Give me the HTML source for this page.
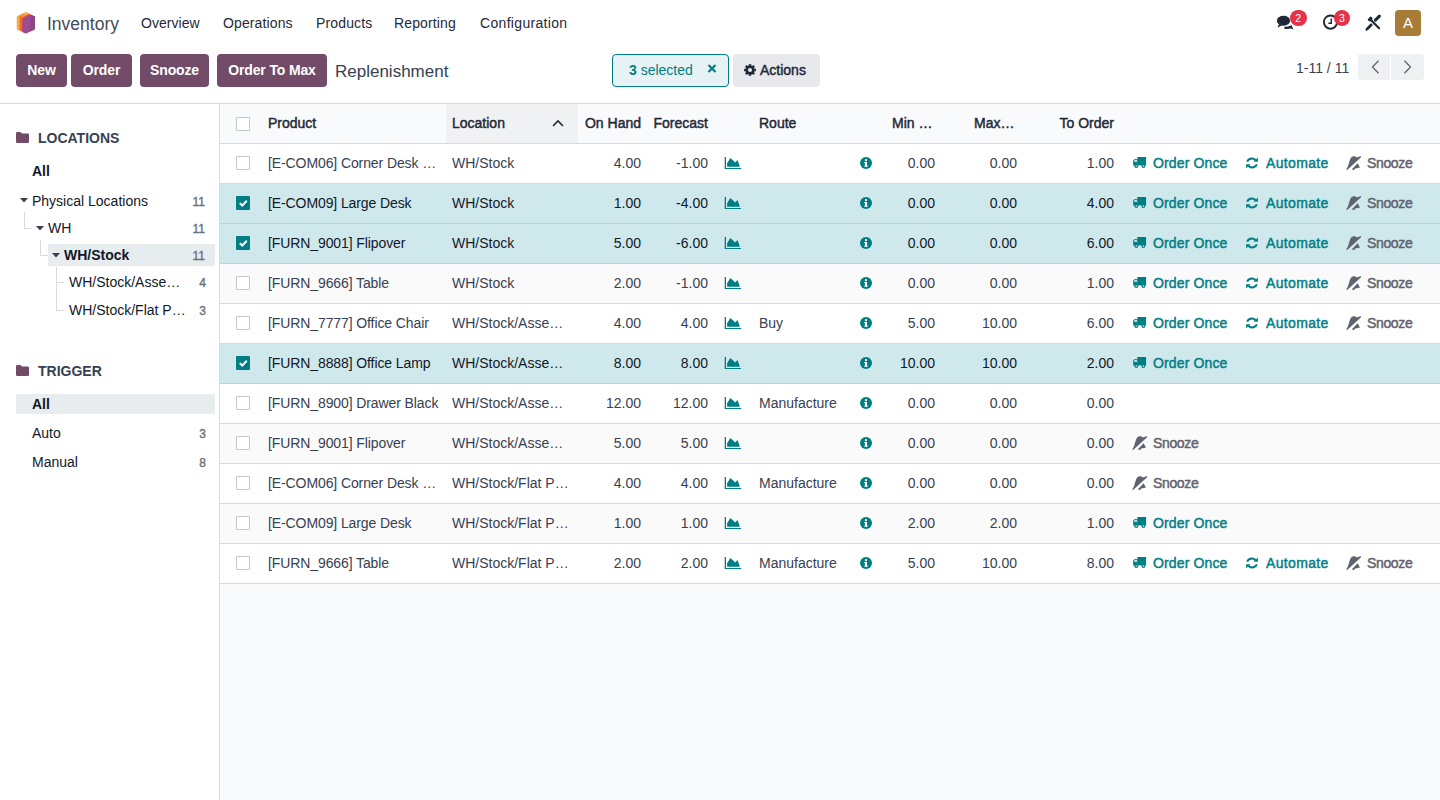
<!DOCTYPE html>
<html><head><meta charset="utf-8"><title>Replenishment</title>
<style>
*{box-sizing:border-box;margin:0;padding:0}
html,body{width:1440px;height:800px;overflow:hidden;background:#fff}
body{font-family:"Liberation Sans",sans-serif;font-size:14px;color:#374151;position:relative}
.a{position:absolute;white-space:nowrap;line-height:20px}
.b{font-weight:bold}
#nav{position:absolute;left:0;top:0;width:1440px;height:46px;background:#fff}
.nv{color:#1f2937}
#cp{position:absolute;left:0;top:46px;width:1440px;height:58px;background:#fff;border-bottom:1px solid #d8dadd}
.btnp{position:absolute;top:8px;height:33px;background:#714b67;color:#fff;font-weight:bold;letter-spacing:-0.15px;border-radius:4px;text-align:center;line-height:32px}
#side{position:absolute;left:0;top:104px;width:220px;height:696px;background:#fff;border-right:1px solid #d8dadd}
.cnt{color:#6b6f7a;font-size:12px;-webkit-text-stroke:0.35px #6b6f7a;text-align:right;width:40px}
#main{position:absolute;left:220px;top:104px;width:1220px;height:696px;background:#f9fafb}
#thead{position:absolute;left:0;top:0;width:1220px;height:40px;background:#f9fafb;border-bottom:1px solid #d8dadd;color:#1f2937}
#thead .a{-webkit-text-stroke:0.45px #1f2937}
.row{position:absolute;left:0;width:1220px;height:40px;background:#fff;border-bottom:1px solid #d8dadd;color:#374151}
.row.even{background:#fafafb}
.row.sel{background:#cfe8ec;color:#111827;border-bottom-color:#b9d5da}
.row .a,#thead .a{top:9px}
.r{text-align:right}
.chk{position:absolute;left:16px;top:12px;width:14px;height:14px;border:1px solid #c5c8ce;background:#fff;border-radius:1px}
.chk.on{background:#017e84;border-color:#017e84}
.teal{color:#017e84}
.act{color:#017e84;-webkit-text-stroke:0.45px #017e84}
.sn{color:#5f636f;-webkit-text-stroke:0.45px #5f636f}
svg{position:absolute;overflow:visible}
</style></head>
<body>
<div id="nav">
<svg style="left:0;top:0" width="40" height="40" viewBox="0 0 40 40"><polygon points="25.8,12.3 34.9,16.5 34.9,29.3 25.8,33.5 16.9,29.3 16.9,16.5" fill="#f26b21"/><polygon points="16.9,16.5 19.6,15.2 19.6,30.6 16.9,29.3" fill="#fbab48"/><polygon points="19.6,15.2 25.8,12.3 29,13.8 22.3,17.6" fill="#f7943a"/><polygon points="23.5,13.4 25.8,12.3 28,13.3 25.5,14.5" fill="#fcc24a"/><path d="M22.3,19.6 Q22.6,17.8 24.5,17 L30.2,14.4 L34.9,16.5 L34.9,29.3 L25.8,33.5 L22.3,31.9z" fill="#9d4c92"/><polygon points="30.4,14.6 34.9,16.5 34.9,29.3 30.4,31.4" fill="#8a4787"/></svg>
<div class="a" style="left:47px;top:13px;font-size:17.5px;line-height:22px;color:#454b57">Inventory</div>
<div class="a nv" style="left:141px;top:13px;letter-spacing:0.05px">Overview</div>
<div class="a nv" style="left:223px;top:13px;letter-spacing:0.12px">Operations</div>
<div class="a nv" style="left:316px;top:13px;letter-spacing:0.15px">Products</div>
<div class="a nv" style="left:394px;top:13px;letter-spacing:0.12px">Reporting</div>
<div class="a nv" style="left:480px;top:13px;letter-spacing:0.32px">Configuration</div>
<svg style="left:1270px;top:8px" width="40" height="26" viewBox="0 0 40 26"><ellipse cx="13.5" cy="12.8" rx="6.6" ry="5" fill="#1f2937"/><path d="M9 16L7.5 19.8L12.5 17z" fill="#1f2937"/><path d="M16 19.5Q19.5 19.6 21.5 17L23.5 21.6L19.5 20z" fill="#1f2937"/><path d="M14.5 19.8Q18.5 20.3 21.5 18.6" stroke="#1f2937" stroke-width="2.4" fill="none"/></svg>
<div style="position:absolute;left:1290px;top:9.7px;width:16.5px;height:16px;border-radius:8px;background:#e3324a;color:#fff;font-size:10.5px;line-height:16px;text-align:center">2</div>
<svg style="left:1318px;top:8px" width="26" height="26" viewBox="0 0 26 26"><circle cx="12.5" cy="14.1" r="6.6" stroke="#1f2937" stroke-width="1.9" fill="none"/><path d="M13.3 10.6V15.2H10.4" stroke="#1f2937" stroke-width="1.4" fill="none"/></svg>
<div style="position:absolute;left:1333.8px;top:9.7px;width:16.2px;height:16px;border-radius:8px;background:#e3324a;color:#fff;font-size:10.5px;line-height:16px;text-align:center">3</div>
<svg style="left:1360px;top:8px" width="26" height="26" viewBox="0 0 26 26"><path d="M11.4 12.4L19.1 20.2" stroke="#1f2937" stroke-width="2.2" stroke-linecap="round"/><circle cx="10.1" cy="11" r="2.4" fill="#1f2937"/><path d="M6.2 9.6L8.6 7.2L10.2 8.8L8 11z" fill="#fff"/><path d="M15.4 12.1L19.4 8.1" stroke="#1f2937" stroke-width="3" stroke-linecap="round"/><path d="M11.1 16.6L7.2 20.5L6.5 21.6L7.6 20.9L11.5 17z" stroke="#1f2937" stroke-width="2.2" stroke-linejoin="round" fill="#1f2937"/></svg>
<div style="position:absolute;left:1395px;top:10px;width:26px;height:26px;background:#a67c36;border-radius:4px;color:#fff;text-align:center;line-height:26px;font-size:15px">A</div>
</div>
<div id="cp">
<div class="btnp" style="left:16px;width:51px">New</div>
<div class="btnp" style="left:71px;width:61px">Order</div>
<div class="btnp" style="left:140px;width:69px">Snooze</div>
<div class="btnp" style="left:217px;width:110px">Order To Max</div>
<div class="a" style="left:335px;top:14.5px;font-size:17px;line-height:22px;color:#374151">Replenishment</div>
<div style="position:absolute;left:612px;top:8px;width:117px;height:33px;border:1px solid #017e84;background:#e6f2f3;border-radius:4px"></div>
<div class="a teal" style="left:629px;top:14px"><b>3</b> selected</div>
<svg style="left:707px;top:18px" width="10" height="9" viewBox="0 0 10 9"><path d="M1.5 1L8.5 8M8.5 1L1.5 8" stroke="#017e84" stroke-width="2.2"/></svg>
<div style="position:absolute;left:733px;top:8px;width:87px;height:33px;background:#e7e9ed;border-radius:4px"></div>
<svg style="left:744px;top:18px" width="12" height="12" viewBox="0 0 12 12"><polygon points="11.86,4.71 11.86,7.29 10.43,7.24 10.01,8.25 11.05,9.23 9.23,11.05 8.25,10.01 7.24,10.43 7.29,11.86 4.71,11.86 4.76,10.43 3.75,10.01 2.77,11.05 0.95,9.23 1.99,8.25 1.57,7.24 0.14,7.29 0.14,4.71 1.57,4.76 1.99,3.75 0.95,2.77 2.77,0.95 3.75,1.99 4.76,1.57 4.71,0.14 7.29,0.14 7.24,1.57 8.25,1.99 9.23,0.95 11.05,2.77 10.01,3.75 10.43,4.76" fill="#1f2937"/><circle cx="6" cy="6" r="2" fill="#e7e9ed"/></svg>
<div class="a" style="left:760px;top:14px;color:#1f2937;-webkit-text-stroke:0.45px #1f2937">Actions</div>
<div class="a" style="left:1296px;top:12px;color:#374151">1-11 / 11</div>
<div style="position:absolute;left:1358px;top:8px;width:32px;height:26px;background:#eff0f2;border-radius:3px 0 0 3px"></div>
<div style="position:absolute;left:1391px;top:8px;width:33px;height:26px;background:#eff0f2;border-radius:0 3px 3px 0"></div>
<svg style="left:1371px;top:14px" width="9" height="14" viewBox="0 0 9 14"><path d="M7.5 0.8L1.5 7L7.5 13.2" stroke="#5f636f" stroke-width="1.3" fill="none"/></svg>
<svg style="left:1403px;top:14px" width="9" height="14" viewBox="0 0 9 14"><path d="M1.5 0.8L7.5 7L1.5 13.2" stroke="#5f636f" stroke-width="1.3" fill="none"/></svg>
</div>
<div id="side">
<svg style="left:16px;top:28px" width="13" height="11" viewBox="0 0 13 11"><path d="M0 1.2Q0 0 1.2 0H4.5L6 1.6H11.8Q13 1.6 13 2.8V9.8Q13 11 11.8 11H1.2Q0 11 0 9.8z" fill="#714b67"/></svg>
<div class="a b" style="left:38px;top:24px;color:#374151">LOCATIONS</div>
<div class="a b" style="left:32px;top:57px;color:#111827">All</div>
<svg style="left:20px;top:94px" width="8" height="5" viewBox="0 0 8 5"><path d="M0 0H8L4 4.5z" fill="#374151"/></svg>
<div class="a " style="left:32px;top:87px;color:#111827">Physical Locations</div>
<div class="a cnt" style="left:165px;top:88px;">11</div>
<div style="position:absolute;left:24px;top:108px;width:8px;height:17px;border-left:1px solid #d8dadd;border-bottom:1px solid #d8dadd"></div>
<svg style="left:36px;top:122px" width="8" height="5" viewBox="0 0 8 5"><path d="M0 0H8L4 4.5z" fill="#374151"/></svg>
<div class="a " style="left:48px;top:114px;color:#111827">WH</div>
<div class="a cnt" style="left:165px;top:115px;">11</div>
<div style="position:absolute;left:40px;top:136px;width:8px;height:16px;border-left:1px solid #d8dadd;border-bottom:1px solid #d8dadd"></div>
<div style="position:absolute;left:48px;top:140px;width:167px;height:22px;background:#e7ecef"></div>
<svg style="left:52px;top:149px" width="8" height="5" viewBox="0 0 8 5"><path d="M0 0H8L4 4.5z" fill="#374151"/></svg>
<div class="a b" style="left:64px;top:141px;color:#111827">WH/Stock</div>
<div class="a cnt" style="left:165px;top:142px;">11</div>
<div style="position:absolute;left:56px;top:163px;width:8px;height:16px;border-left:1px solid #d8dadd;border-bottom:1px solid #d8dadd"></div>
<div style="position:absolute;left:56px;top:179px;width:8px;height:28px;border-left:1px solid #d8dadd;border-bottom:1px solid #d8dadd"></div>
<div class="a " style="left:69px;top:168px;color:#111827">WH/Stock/Asse…</div>
<div class="a cnt" style="left:166px;top:169px;">4</div>
<div class="a " style="left:69px;top:196px;color:#111827">WH/Stock/Flat P…</div>
<div class="a cnt" style="left:166px;top:197px;">3</div>
<svg style="left:16px;top:261px" width="13" height="11" viewBox="0 0 13 11"><path d="M0 1.2Q0 0 1.2 0H4.5L6 1.6H11.8Q13 1.6 13 2.8V9.8Q13 11 11.8 11H1.2Q0 11 0 9.8z" fill="#714b67"/></svg>
<div class="a b" style="left:38px;top:257px;color:#374151">TRIGGER</div>
<div style="position:absolute;left:16px;top:290px;width:199px;height:20px;background:#e7ecef"></div>
<div class="a b" style="left:32px;top:290px;color:#111827">All</div>
<div class="a " style="left:32px;top:319px;color:#111827">Auto</div>
<div class="a cnt" style="left:166px;top:320px;">3</div>
<div class="a " style="left:32px;top:348px;color:#111827">Manual</div>
<div class="a cnt" style="left:166px;top:349px;">8</div>
</div>
<div id="main">
<div id="thead">
<div style="position:absolute;left:226px;top:0;width:132px;height:39px;background:#eff1f3"></div>
<div class="chk" style="top:13px"></div>
<div class="a " style="left:48px;top:9px;">Product</div>
<div class="a " style="left:232px;top:9px;">Location</div>
<svg style="left:332px;top:15px" width="12" height="8" viewBox="0 0 12 8"><path d="M1 7L6 2L11 7" stroke="#1f2937" stroke-width="1.6" fill="none"/></svg>
<div class="a r " style="right:799px;top:9px;">On Hand</div>
<div class="a r " style="right:732px;top:9px;">Forecast</div>
<div class="a " style="left:539px;top:9px;">Route</div>
<div class="a " style="left:672px;top:9px;">Min …</div>
<div class="a " style="left:754px;top:9px;">Max…</div>
<div class="a r " style="right:326px;top:9px;">To Order</div>
</div>
<div class="row" style="top:40px">
<div class="chk"></div>
<div class="a " style="left:48px;top:9px;letter-spacing:-0.1px">[E-COM06] Corner Desk …</div>
<div class="a " style="left:232px;top:9px;">WH/Stock</div>
<div class="a r " style="right:799px;top:9px;">4.00</div>
<div class="a r " style="right:732px;top:9px;">-1.00</div>
<svg style="left:504px;top:12px" width="17" height="14" viewBox="0 0 17 14"><path d="M0.7 1H2V12H17V13.1H0.7z" fill="#017e84"/><path d="M3.1 10.7V7.2L6.4 2L11.2 6.6L13.5 3.9L15.9 10.7z" fill="#017e84"/></svg>
<svg style="left:640px;top:13px" width="12" height="12" viewBox="0 0 12 12"><circle cx="6" cy="6" r="6" fill="#017e84"/><rect x="5" y="5" width="2" height="4.5" fill="#fff"/><rect x="4.2" y="8.6" width="3.6" height="1" fill="#fff"/><rect x="4.2" y="5" width="2.8" height="1" fill="#fff"/><circle cx="6" cy="3.2" r="1.1" fill="#fff"/></svg>
<div class="a r " style="right:505px;top:9px;">0.00</div>
<div class="a r " style="right:423px;top:9px;">0.00</div>
<div class="a r " style="right:326px;top:9px;">1.00</div>
<svg style="left:913px;top:13px" width="14" height="12" viewBox="0 0 14 12"><rect x="4.3" y="0" width="8.8" height="8.4" fill="#017e84"/><path d="M0.2 8.4V3.6L1.6 2H4.6V8.4z" fill="#017e84"/><path d="M1.3 3.4L2 2.8H4V5.1H1.3z" fill="#fff" opacity="0.75"/><circle cx="3.3" cy="9.1" r="2" fill="#017e84"/><circle cx="10.4" cy="9.1" r="2" fill="#017e84"/><circle cx="3.3" cy="9.1" r="0.8" fill="#fff" opacity="0.8"/><circle cx="10.4" cy="9.1" r="0.8" fill="#fff" opacity="0.8"/></svg>
<div class="a act" style="left:933px;top:9px;letter-spacing:0.14px">Order Once</div>
<svg style="left:1026px;top:13px" width="12" height="12" viewBox="0 0 12 12"><path d="M1.1 4.6A5 4.6 0 0 1 9.6 3.2" stroke="#017e84" stroke-width="2.1" fill="none"/><path d="M11.9 0.4V4.7H7.6z" fill="#017e84"/><path d="M10.9 7.4A5 4.6 0 0 1 2.4 8.8" stroke="#017e84" stroke-width="2.1" fill="none"/><path d="M0.1 11.6V7.3H4.4z" fill="#017e84"/></svg>
<div class="a act" style="left:1046px;top:9px;letter-spacing:0.35px">Automate</div>
<svg style="left:1126px;top:12px" width="16" height="15" viewBox="0 0 16 15"><path d="M0.2 13.6C1.8 11.5 2.6 8.5 3.4 5.5C4.2 2.4 5.5 0.4 7.3 0.2C8.8 0.1 10 0.6 11 1.6L14.2 0.3C14.8 0.1 15.4 0.7 15.1 1.3L1.1 14.1Z" fill="#5f636f"/><path d="M6 13.2L11.6 7.3L14 11.6Z" fill="#5f636f"/><path d="M6.2 12.6L9.3 12.3L8.6 13.8L6.8 14Z" fill="#5f636f"/></svg>
<div class="a sn" style="left:1147px;top:9px;letter-spacing:-0.35px">Snooze</div>
</div>
<div class="row sel" style="top:80px">
<svg style="left:16px;top:12px" width="14" height="14" viewBox="0 0 14 14"><rect x="0" y="0" width="14" height="14" rx="1" fill="#017e84"/><path d="M3.8 7.1L6.3 9.5L10.8 4.8" stroke="#fff" stroke-width="2" fill="none"/></svg>
<div class="a " style="left:48px;top:9px;letter-spacing:-0.1px">[E-COM09] Large Desk</div>
<div class="a " style="left:232px;top:9px;">WH/Stock</div>
<div class="a r " style="right:799px;top:9px;">1.00</div>
<div class="a r " style="right:732px;top:9px;">-4.00</div>
<svg style="left:504px;top:12px" width="17" height="14" viewBox="0 0 17 14"><path d="M0.7 1H2V12H17V13.1H0.7z" fill="#017e84"/><path d="M3.1 10.7V7.2L6.4 2L11.2 6.6L13.5 3.9L15.9 10.7z" fill="#017e84"/></svg>
<svg style="left:640px;top:13px" width="12" height="12" viewBox="0 0 12 12"><circle cx="6" cy="6" r="6" fill="#017e84"/><rect x="5" y="5" width="2" height="4.5" fill="#fff"/><rect x="4.2" y="8.6" width="3.6" height="1" fill="#fff"/><rect x="4.2" y="5" width="2.8" height="1" fill="#fff"/><circle cx="6" cy="3.2" r="1.1" fill="#fff"/></svg>
<div class="a r " style="right:505px;top:9px;">0.00</div>
<div class="a r " style="right:423px;top:9px;">0.00</div>
<div class="a r " style="right:326px;top:9px;">4.00</div>
<svg style="left:913px;top:13px" width="14" height="12" viewBox="0 0 14 12"><rect x="4.3" y="0" width="8.8" height="8.4" fill="#017e84"/><path d="M0.2 8.4V3.6L1.6 2H4.6V8.4z" fill="#017e84"/><path d="M1.3 3.4L2 2.8H4V5.1H1.3z" fill="#fff" opacity="0.75"/><circle cx="3.3" cy="9.1" r="2" fill="#017e84"/><circle cx="10.4" cy="9.1" r="2" fill="#017e84"/><circle cx="3.3" cy="9.1" r="0.8" fill="#fff" opacity="0.8"/><circle cx="10.4" cy="9.1" r="0.8" fill="#fff" opacity="0.8"/></svg>
<div class="a act" style="left:933px;top:9px;letter-spacing:0.14px">Order Once</div>
<svg style="left:1026px;top:13px" width="12" height="12" viewBox="0 0 12 12"><path d="M1.1 4.6A5 4.6 0 0 1 9.6 3.2" stroke="#017e84" stroke-width="2.1" fill="none"/><path d="M11.9 0.4V4.7H7.6z" fill="#017e84"/><path d="M10.9 7.4A5 4.6 0 0 1 2.4 8.8" stroke="#017e84" stroke-width="2.1" fill="none"/><path d="M0.1 11.6V7.3H4.4z" fill="#017e84"/></svg>
<div class="a act" style="left:1046px;top:9px;letter-spacing:0.35px">Automate</div>
<svg style="left:1126px;top:12px" width="16" height="15" viewBox="0 0 16 15"><path d="M0.2 13.6C1.8 11.5 2.6 8.5 3.4 5.5C4.2 2.4 5.5 0.4 7.3 0.2C8.8 0.1 10 0.6 11 1.6L14.2 0.3C14.8 0.1 15.4 0.7 15.1 1.3L1.1 14.1Z" fill="#5f636f"/><path d="M6 13.2L11.6 7.3L14 11.6Z" fill="#5f636f"/><path d="M6.2 12.6L9.3 12.3L8.6 13.8L6.8 14Z" fill="#5f636f"/></svg>
<div class="a sn" style="left:1147px;top:9px;letter-spacing:-0.35px">Snooze</div>
</div>
<div class="row sel" style="top:120px">
<svg style="left:16px;top:12px" width="14" height="14" viewBox="0 0 14 14"><rect x="0" y="0" width="14" height="14" rx="1" fill="#017e84"/><path d="M3.8 7.1L6.3 9.5L10.8 4.8" stroke="#fff" stroke-width="2" fill="none"/></svg>
<div class="a " style="left:48px;top:9px;letter-spacing:-0.1px">[FURN_9001] Flipover</div>
<div class="a " style="left:232px;top:9px;">WH/Stock</div>
<div class="a r " style="right:799px;top:9px;">5.00</div>
<div class="a r " style="right:732px;top:9px;">-6.00</div>
<svg style="left:504px;top:12px" width="17" height="14" viewBox="0 0 17 14"><path d="M0.7 1H2V12H17V13.1H0.7z" fill="#017e84"/><path d="M3.1 10.7V7.2L6.4 2L11.2 6.6L13.5 3.9L15.9 10.7z" fill="#017e84"/></svg>
<svg style="left:640px;top:13px" width="12" height="12" viewBox="0 0 12 12"><circle cx="6" cy="6" r="6" fill="#017e84"/><rect x="5" y="5" width="2" height="4.5" fill="#fff"/><rect x="4.2" y="8.6" width="3.6" height="1" fill="#fff"/><rect x="4.2" y="5" width="2.8" height="1" fill="#fff"/><circle cx="6" cy="3.2" r="1.1" fill="#fff"/></svg>
<div class="a r " style="right:505px;top:9px;">0.00</div>
<div class="a r " style="right:423px;top:9px;">0.00</div>
<div class="a r " style="right:326px;top:9px;">6.00</div>
<svg style="left:913px;top:13px" width="14" height="12" viewBox="0 0 14 12"><rect x="4.3" y="0" width="8.8" height="8.4" fill="#017e84"/><path d="M0.2 8.4V3.6L1.6 2H4.6V8.4z" fill="#017e84"/><path d="M1.3 3.4L2 2.8H4V5.1H1.3z" fill="#fff" opacity="0.75"/><circle cx="3.3" cy="9.1" r="2" fill="#017e84"/><circle cx="10.4" cy="9.1" r="2" fill="#017e84"/><circle cx="3.3" cy="9.1" r="0.8" fill="#fff" opacity="0.8"/><circle cx="10.4" cy="9.1" r="0.8" fill="#fff" opacity="0.8"/></svg>
<div class="a act" style="left:933px;top:9px;letter-spacing:0.14px">Order Once</div>
<svg style="left:1026px;top:13px" width="12" height="12" viewBox="0 0 12 12"><path d="M1.1 4.6A5 4.6 0 0 1 9.6 3.2" stroke="#017e84" stroke-width="2.1" fill="none"/><path d="M11.9 0.4V4.7H7.6z" fill="#017e84"/><path d="M10.9 7.4A5 4.6 0 0 1 2.4 8.8" stroke="#017e84" stroke-width="2.1" fill="none"/><path d="M0.1 11.6V7.3H4.4z" fill="#017e84"/></svg>
<div class="a act" style="left:1046px;top:9px;letter-spacing:0.35px">Automate</div>
<svg style="left:1126px;top:12px" width="16" height="15" viewBox="0 0 16 15"><path d="M0.2 13.6C1.8 11.5 2.6 8.5 3.4 5.5C4.2 2.4 5.5 0.4 7.3 0.2C8.8 0.1 10 0.6 11 1.6L14.2 0.3C14.8 0.1 15.4 0.7 15.1 1.3L1.1 14.1Z" fill="#5f636f"/><path d="M6 13.2L11.6 7.3L14 11.6Z" fill="#5f636f"/><path d="M6.2 12.6L9.3 12.3L8.6 13.8L6.8 14Z" fill="#5f636f"/></svg>
<div class="a sn" style="left:1147px;top:9px;letter-spacing:-0.35px">Snooze</div>
</div>
<div class="row even" style="top:160px">
<div class="chk"></div>
<div class="a " style="left:48px;top:9px;letter-spacing:-0.1px">[FURN_9666] Table</div>
<div class="a " style="left:232px;top:9px;">WH/Stock</div>
<div class="a r " style="right:799px;top:9px;">2.00</div>
<div class="a r " style="right:732px;top:9px;">-1.00</div>
<svg style="left:504px;top:12px" width="17" height="14" viewBox="0 0 17 14"><path d="M0.7 1H2V12H17V13.1H0.7z" fill="#017e84"/><path d="M3.1 10.7V7.2L6.4 2L11.2 6.6L13.5 3.9L15.9 10.7z" fill="#017e84"/></svg>
<svg style="left:640px;top:13px" width="12" height="12" viewBox="0 0 12 12"><circle cx="6" cy="6" r="6" fill="#017e84"/><rect x="5" y="5" width="2" height="4.5" fill="#fff"/><rect x="4.2" y="8.6" width="3.6" height="1" fill="#fff"/><rect x="4.2" y="5" width="2.8" height="1" fill="#fff"/><circle cx="6" cy="3.2" r="1.1" fill="#fff"/></svg>
<div class="a r " style="right:505px;top:9px;">0.00</div>
<div class="a r " style="right:423px;top:9px;">0.00</div>
<div class="a r " style="right:326px;top:9px;">1.00</div>
<svg style="left:913px;top:13px" width="14" height="12" viewBox="0 0 14 12"><rect x="4.3" y="0" width="8.8" height="8.4" fill="#017e84"/><path d="M0.2 8.4V3.6L1.6 2H4.6V8.4z" fill="#017e84"/><path d="M1.3 3.4L2 2.8H4V5.1H1.3z" fill="#fff" opacity="0.75"/><circle cx="3.3" cy="9.1" r="2" fill="#017e84"/><circle cx="10.4" cy="9.1" r="2" fill="#017e84"/><circle cx="3.3" cy="9.1" r="0.8" fill="#fff" opacity="0.8"/><circle cx="10.4" cy="9.1" r="0.8" fill="#fff" opacity="0.8"/></svg>
<div class="a act" style="left:933px;top:9px;letter-spacing:0.14px">Order Once</div>
<svg style="left:1026px;top:13px" width="12" height="12" viewBox="0 0 12 12"><path d="M1.1 4.6A5 4.6 0 0 1 9.6 3.2" stroke="#017e84" stroke-width="2.1" fill="none"/><path d="M11.9 0.4V4.7H7.6z" fill="#017e84"/><path d="M10.9 7.4A5 4.6 0 0 1 2.4 8.8" stroke="#017e84" stroke-width="2.1" fill="none"/><path d="M0.1 11.6V7.3H4.4z" fill="#017e84"/></svg>
<div class="a act" style="left:1046px;top:9px;letter-spacing:0.35px">Automate</div>
<svg style="left:1126px;top:12px" width="16" height="15" viewBox="0 0 16 15"><path d="M0.2 13.6C1.8 11.5 2.6 8.5 3.4 5.5C4.2 2.4 5.5 0.4 7.3 0.2C8.8 0.1 10 0.6 11 1.6L14.2 0.3C14.8 0.1 15.4 0.7 15.1 1.3L1.1 14.1Z" fill="#5f636f"/><path d="M6 13.2L11.6 7.3L14 11.6Z" fill="#5f636f"/><path d="M6.2 12.6L9.3 12.3L8.6 13.8L6.8 14Z" fill="#5f636f"/></svg>
<div class="a sn" style="left:1147px;top:9px;letter-spacing:-0.35px">Snooze</div>
</div>
<div class="row" style="top:200px">
<div class="chk"></div>
<div class="a " style="left:48px;top:9px;letter-spacing:-0.1px">[FURN_7777] Office Chair</div>
<div class="a " style="left:232px;top:9px;">WH/Stock/Asse…</div>
<div class="a r " style="right:799px;top:9px;">4.00</div>
<div class="a r " style="right:732px;top:9px;">4.00</div>
<svg style="left:504px;top:12px" width="17" height="14" viewBox="0 0 17 14"><path d="M0.7 1H2V12H17V13.1H0.7z" fill="#017e84"/><path d="M3.1 10.7V7.2L6.4 2L11.2 6.6L13.5 3.9L15.9 10.7z" fill="#017e84"/></svg>
<div class="a " style="left:539px;top:9px;">Buy</div>
<svg style="left:640px;top:13px" width="12" height="12" viewBox="0 0 12 12"><circle cx="6" cy="6" r="6" fill="#017e84"/><rect x="5" y="5" width="2" height="4.5" fill="#fff"/><rect x="4.2" y="8.6" width="3.6" height="1" fill="#fff"/><rect x="4.2" y="5" width="2.8" height="1" fill="#fff"/><circle cx="6" cy="3.2" r="1.1" fill="#fff"/></svg>
<div class="a r " style="right:505px;top:9px;">5.00</div>
<div class="a r " style="right:423px;top:9px;">10.00</div>
<div class="a r " style="right:326px;top:9px;">6.00</div>
<svg style="left:913px;top:13px" width="14" height="12" viewBox="0 0 14 12"><rect x="4.3" y="0" width="8.8" height="8.4" fill="#017e84"/><path d="M0.2 8.4V3.6L1.6 2H4.6V8.4z" fill="#017e84"/><path d="M1.3 3.4L2 2.8H4V5.1H1.3z" fill="#fff" opacity="0.75"/><circle cx="3.3" cy="9.1" r="2" fill="#017e84"/><circle cx="10.4" cy="9.1" r="2" fill="#017e84"/><circle cx="3.3" cy="9.1" r="0.8" fill="#fff" opacity="0.8"/><circle cx="10.4" cy="9.1" r="0.8" fill="#fff" opacity="0.8"/></svg>
<div class="a act" style="left:933px;top:9px;letter-spacing:0.14px">Order Once</div>
<svg style="left:1026px;top:13px" width="12" height="12" viewBox="0 0 12 12"><path d="M1.1 4.6A5 4.6 0 0 1 9.6 3.2" stroke="#017e84" stroke-width="2.1" fill="none"/><path d="M11.9 0.4V4.7H7.6z" fill="#017e84"/><path d="M10.9 7.4A5 4.6 0 0 1 2.4 8.8" stroke="#017e84" stroke-width="2.1" fill="none"/><path d="M0.1 11.6V7.3H4.4z" fill="#017e84"/></svg>
<div class="a act" style="left:1046px;top:9px;letter-spacing:0.35px">Automate</div>
<svg style="left:1126px;top:12px" width="16" height="15" viewBox="0 0 16 15"><path d="M0.2 13.6C1.8 11.5 2.6 8.5 3.4 5.5C4.2 2.4 5.5 0.4 7.3 0.2C8.8 0.1 10 0.6 11 1.6L14.2 0.3C14.8 0.1 15.4 0.7 15.1 1.3L1.1 14.1Z" fill="#5f636f"/><path d="M6 13.2L11.6 7.3L14 11.6Z" fill="#5f636f"/><path d="M6.2 12.6L9.3 12.3L8.6 13.8L6.8 14Z" fill="#5f636f"/></svg>
<div class="a sn" style="left:1147px;top:9px;letter-spacing:-0.35px">Snooze</div>
</div>
<div class="row sel" style="top:240px">
<svg style="left:16px;top:12px" width="14" height="14" viewBox="0 0 14 14"><rect x="0" y="0" width="14" height="14" rx="1" fill="#017e84"/><path d="M3.8 7.1L6.3 9.5L10.8 4.8" stroke="#fff" stroke-width="2" fill="none"/></svg>
<div class="a " style="left:48px;top:9px;letter-spacing:-0.1px">[FURN_8888] Office Lamp</div>
<div class="a " style="left:232px;top:9px;">WH/Stock/Asse…</div>
<div class="a r " style="right:799px;top:9px;">8.00</div>
<div class="a r " style="right:732px;top:9px;">8.00</div>
<svg style="left:504px;top:12px" width="17" height="14" viewBox="0 0 17 14"><path d="M0.7 1H2V12H17V13.1H0.7z" fill="#017e84"/><path d="M3.1 10.7V7.2L6.4 2L11.2 6.6L13.5 3.9L15.9 10.7z" fill="#017e84"/></svg>
<svg style="left:640px;top:13px" width="12" height="12" viewBox="0 0 12 12"><circle cx="6" cy="6" r="6" fill="#017e84"/><rect x="5" y="5" width="2" height="4.5" fill="#fff"/><rect x="4.2" y="8.6" width="3.6" height="1" fill="#fff"/><rect x="4.2" y="5" width="2.8" height="1" fill="#fff"/><circle cx="6" cy="3.2" r="1.1" fill="#fff"/></svg>
<div class="a r " style="right:505px;top:9px;">10.00</div>
<div class="a r " style="right:423px;top:9px;">10.00</div>
<div class="a r " style="right:326px;top:9px;">2.00</div>
<svg style="left:913px;top:13px" width="14" height="12" viewBox="0 0 14 12"><rect x="4.3" y="0" width="8.8" height="8.4" fill="#017e84"/><path d="M0.2 8.4V3.6L1.6 2H4.6V8.4z" fill="#017e84"/><path d="M1.3 3.4L2 2.8H4V5.1H1.3z" fill="#fff" opacity="0.75"/><circle cx="3.3" cy="9.1" r="2" fill="#017e84"/><circle cx="10.4" cy="9.1" r="2" fill="#017e84"/><circle cx="3.3" cy="9.1" r="0.8" fill="#fff" opacity="0.8"/><circle cx="10.4" cy="9.1" r="0.8" fill="#fff" opacity="0.8"/></svg>
<div class="a act" style="left:933px;top:9px;letter-spacing:0.14px">Order Once</div>
</div>
<div class="row" style="top:280px">
<div class="chk"></div>
<div class="a " style="left:48px;top:9px;letter-spacing:-0.1px">[FURN_8900] Drawer Black</div>
<div class="a " style="left:232px;top:9px;">WH/Stock/Asse…</div>
<div class="a r " style="right:799px;top:9px;">12.00</div>
<div class="a r " style="right:732px;top:9px;">12.00</div>
<svg style="left:504px;top:12px" width="17" height="14" viewBox="0 0 17 14"><path d="M0.7 1H2V12H17V13.1H0.7z" fill="#017e84"/><path d="M3.1 10.7V7.2L6.4 2L11.2 6.6L13.5 3.9L15.9 10.7z" fill="#017e84"/></svg>
<div class="a " style="left:539px;top:9px;">Manufacture</div>
<svg style="left:640px;top:13px" width="12" height="12" viewBox="0 0 12 12"><circle cx="6" cy="6" r="6" fill="#017e84"/><rect x="5" y="5" width="2" height="4.5" fill="#fff"/><rect x="4.2" y="8.6" width="3.6" height="1" fill="#fff"/><rect x="4.2" y="5" width="2.8" height="1" fill="#fff"/><circle cx="6" cy="3.2" r="1.1" fill="#fff"/></svg>
<div class="a r " style="right:505px;top:9px;">0.00</div>
<div class="a r " style="right:423px;top:9px;">0.00</div>
<div class="a r " style="right:326px;top:9px;">0.00</div>
</div>
<div class="row even" style="top:320px">
<div class="chk"></div>
<div class="a " style="left:48px;top:9px;letter-spacing:-0.1px">[FURN_9001] Flipover</div>
<div class="a " style="left:232px;top:9px;">WH/Stock/Asse…</div>
<div class="a r " style="right:799px;top:9px;">5.00</div>
<div class="a r " style="right:732px;top:9px;">5.00</div>
<svg style="left:504px;top:12px" width="17" height="14" viewBox="0 0 17 14"><path d="M0.7 1H2V12H17V13.1H0.7z" fill="#017e84"/><path d="M3.1 10.7V7.2L6.4 2L11.2 6.6L13.5 3.9L15.9 10.7z" fill="#017e84"/></svg>
<svg style="left:640px;top:13px" width="12" height="12" viewBox="0 0 12 12"><circle cx="6" cy="6" r="6" fill="#017e84"/><rect x="5" y="5" width="2" height="4.5" fill="#fff"/><rect x="4.2" y="8.6" width="3.6" height="1" fill="#fff"/><rect x="4.2" y="5" width="2.8" height="1" fill="#fff"/><circle cx="6" cy="3.2" r="1.1" fill="#fff"/></svg>
<div class="a r " style="right:505px;top:9px;">0.00</div>
<div class="a r " style="right:423px;top:9px;">0.00</div>
<div class="a r " style="right:326px;top:9px;">0.00</div>
<svg style="left:912px;top:12px" width="16" height="15" viewBox="0 0 16 15"><path d="M0.2 13.6C1.8 11.5 2.6 8.5 3.4 5.5C4.2 2.4 5.5 0.4 7.3 0.2C8.8 0.1 10 0.6 11 1.6L14.2 0.3C14.8 0.1 15.4 0.7 15.1 1.3L1.1 14.1Z" fill="#5f636f"/><path d="M6 13.2L11.6 7.3L14 11.6Z" fill="#5f636f"/><path d="M6.2 12.6L9.3 12.3L8.6 13.8L6.8 14Z" fill="#5f636f"/></svg>
<div class="a sn" style="left:933px;top:9px;letter-spacing:-0.35px">Snooze</div>
</div>
<div class="row" style="top:360px">
<div class="chk"></div>
<div class="a " style="left:48px;top:9px;letter-spacing:-0.1px">[E-COM06] Corner Desk …</div>
<div class="a " style="left:232px;top:9px;">WH/Stock/Flat P…</div>
<div class="a r " style="right:799px;top:9px;">4.00</div>
<div class="a r " style="right:732px;top:9px;">4.00</div>
<svg style="left:504px;top:12px" width="17" height="14" viewBox="0 0 17 14"><path d="M0.7 1H2V12H17V13.1H0.7z" fill="#017e84"/><path d="M3.1 10.7V7.2L6.4 2L11.2 6.6L13.5 3.9L15.9 10.7z" fill="#017e84"/></svg>
<div class="a " style="left:539px;top:9px;">Manufacture</div>
<svg style="left:640px;top:13px" width="12" height="12" viewBox="0 0 12 12"><circle cx="6" cy="6" r="6" fill="#017e84"/><rect x="5" y="5" width="2" height="4.5" fill="#fff"/><rect x="4.2" y="8.6" width="3.6" height="1" fill="#fff"/><rect x="4.2" y="5" width="2.8" height="1" fill="#fff"/><circle cx="6" cy="3.2" r="1.1" fill="#fff"/></svg>
<div class="a r " style="right:505px;top:9px;">0.00</div>
<div class="a r " style="right:423px;top:9px;">0.00</div>
<div class="a r " style="right:326px;top:9px;">0.00</div>
<svg style="left:912px;top:12px" width="16" height="15" viewBox="0 0 16 15"><path d="M0.2 13.6C1.8 11.5 2.6 8.5 3.4 5.5C4.2 2.4 5.5 0.4 7.3 0.2C8.8 0.1 10 0.6 11 1.6L14.2 0.3C14.8 0.1 15.4 0.7 15.1 1.3L1.1 14.1Z" fill="#5f636f"/><path d="M6 13.2L11.6 7.3L14 11.6Z" fill="#5f636f"/><path d="M6.2 12.6L9.3 12.3L8.6 13.8L6.8 14Z" fill="#5f636f"/></svg>
<div class="a sn" style="left:933px;top:9px;letter-spacing:-0.35px">Snooze</div>
</div>
<div class="row even" style="top:400px">
<div class="chk"></div>
<div class="a " style="left:48px;top:9px;letter-spacing:-0.1px">[E-COM09] Large Desk</div>
<div class="a " style="left:232px;top:9px;">WH/Stock/Flat P…</div>
<div class="a r " style="right:799px;top:9px;">1.00</div>
<div class="a r " style="right:732px;top:9px;">1.00</div>
<svg style="left:504px;top:12px" width="17" height="14" viewBox="0 0 17 14"><path d="M0.7 1H2V12H17V13.1H0.7z" fill="#017e84"/><path d="M3.1 10.7V7.2L6.4 2L11.2 6.6L13.5 3.9L15.9 10.7z" fill="#017e84"/></svg>
<svg style="left:640px;top:13px" width="12" height="12" viewBox="0 0 12 12"><circle cx="6" cy="6" r="6" fill="#017e84"/><rect x="5" y="5" width="2" height="4.5" fill="#fff"/><rect x="4.2" y="8.6" width="3.6" height="1" fill="#fff"/><rect x="4.2" y="5" width="2.8" height="1" fill="#fff"/><circle cx="6" cy="3.2" r="1.1" fill="#fff"/></svg>
<div class="a r " style="right:505px;top:9px;">2.00</div>
<div class="a r " style="right:423px;top:9px;">2.00</div>
<div class="a r " style="right:326px;top:9px;">1.00</div>
<svg style="left:913px;top:13px" width="14" height="12" viewBox="0 0 14 12"><rect x="4.3" y="0" width="8.8" height="8.4" fill="#017e84"/><path d="M0.2 8.4V3.6L1.6 2H4.6V8.4z" fill="#017e84"/><path d="M1.3 3.4L2 2.8H4V5.1H1.3z" fill="#fff" opacity="0.75"/><circle cx="3.3" cy="9.1" r="2" fill="#017e84"/><circle cx="10.4" cy="9.1" r="2" fill="#017e84"/><circle cx="3.3" cy="9.1" r="0.8" fill="#fff" opacity="0.8"/><circle cx="10.4" cy="9.1" r="0.8" fill="#fff" opacity="0.8"/></svg>
<div class="a act" style="left:933px;top:9px;letter-spacing:0.14px">Order Once</div>
</div>
<div class="row" style="top:440px">
<div class="chk"></div>
<div class="a " style="left:48px;top:9px;letter-spacing:-0.1px">[FURN_9666] Table</div>
<div class="a " style="left:232px;top:9px;">WH/Stock/Flat P…</div>
<div class="a r " style="right:799px;top:9px;">2.00</div>
<div class="a r " style="right:732px;top:9px;">2.00</div>
<svg style="left:504px;top:12px" width="17" height="14" viewBox="0 0 17 14"><path d="M0.7 1H2V12H17V13.1H0.7z" fill="#017e84"/><path d="M3.1 10.7V7.2L6.4 2L11.2 6.6L13.5 3.9L15.9 10.7z" fill="#017e84"/></svg>
<div class="a " style="left:539px;top:9px;">Manufacture</div>
<svg style="left:640px;top:13px" width="12" height="12" viewBox="0 0 12 12"><circle cx="6" cy="6" r="6" fill="#017e84"/><rect x="5" y="5" width="2" height="4.5" fill="#fff"/><rect x="4.2" y="8.6" width="3.6" height="1" fill="#fff"/><rect x="4.2" y="5" width="2.8" height="1" fill="#fff"/><circle cx="6" cy="3.2" r="1.1" fill="#fff"/></svg>
<div class="a r " style="right:505px;top:9px;">5.00</div>
<div class="a r " style="right:423px;top:9px;">10.00</div>
<div class="a r " style="right:326px;top:9px;">8.00</div>
<svg style="left:913px;top:13px" width="14" height="12" viewBox="0 0 14 12"><rect x="4.3" y="0" width="8.8" height="8.4" fill="#017e84"/><path d="M0.2 8.4V3.6L1.6 2H4.6V8.4z" fill="#017e84"/><path d="M1.3 3.4L2 2.8H4V5.1H1.3z" fill="#fff" opacity="0.75"/><circle cx="3.3" cy="9.1" r="2" fill="#017e84"/><circle cx="10.4" cy="9.1" r="2" fill="#017e84"/><circle cx="3.3" cy="9.1" r="0.8" fill="#fff" opacity="0.8"/><circle cx="10.4" cy="9.1" r="0.8" fill="#fff" opacity="0.8"/></svg>
<div class="a act" style="left:933px;top:9px;letter-spacing:0.14px">Order Once</div>
<svg style="left:1026px;top:13px" width="12" height="12" viewBox="0 0 12 12"><path d="M1.1 4.6A5 4.6 0 0 1 9.6 3.2" stroke="#017e84" stroke-width="2.1" fill="none"/><path d="M11.9 0.4V4.7H7.6z" fill="#017e84"/><path d="M10.9 7.4A5 4.6 0 0 1 2.4 8.8" stroke="#017e84" stroke-width="2.1" fill="none"/><path d="M0.1 11.6V7.3H4.4z" fill="#017e84"/></svg>
<div class="a act" style="left:1046px;top:9px;letter-spacing:0.35px">Automate</div>
<svg style="left:1126px;top:12px" width="16" height="15" viewBox="0 0 16 15"><path d="M0.2 13.6C1.8 11.5 2.6 8.5 3.4 5.5C4.2 2.4 5.5 0.4 7.3 0.2C8.8 0.1 10 0.6 11 1.6L14.2 0.3C14.8 0.1 15.4 0.7 15.1 1.3L1.1 14.1Z" fill="#5f636f"/><path d="M6 13.2L11.6 7.3L14 11.6Z" fill="#5f636f"/><path d="M6.2 12.6L9.3 12.3L8.6 13.8L6.8 14Z" fill="#5f636f"/></svg>
<div class="a sn" style="left:1147px;top:9px;letter-spacing:-0.35px">Snooze</div>
</div>
</div>
</body></html>
